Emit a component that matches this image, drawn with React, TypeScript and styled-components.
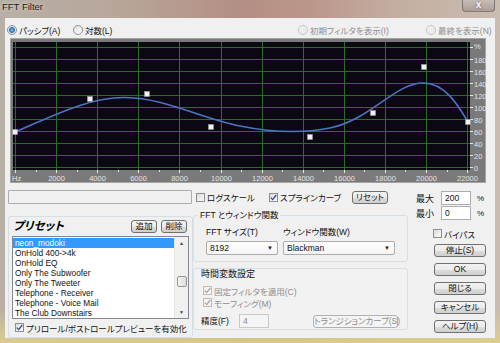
import React from 'react';
import styled, { createGlobalStyle } from 'styled-components';

const GlobalStyle = createGlobalStyle`
  html, body { margin: 0; padding: 0; }
  body {
    width: 500px;
    height: 343px;
    overflow: hidden;
    font-family: "Liberation Sans", "Noto Sans CJK JP", sans-serif;
    font-size: 8.5px;
    font-feature-settings: "palt";
    color: #111;
  }
`;

const Window = styled.div`
  width: 500px;
  height: 343px;
  box-sizing: border-box;
  display: flex;
  flex-direction: column;
  padding: 0 5px 5px 5px;
  background:
    linear-gradient(180deg, rgba(0, 0, 0, 0) 90%, rgba(222, 208, 140, 0.9) 100%),
    linear-gradient(90deg, #b7b0a6 0%, #b8a59a 25%, #b38e84 48%, #bb978b 62%, #c4aea3 80%, #c9bcb1 100%);
`;

const TitleBar = styled.div`
  height: 18px;
  display: flex;
  justify-content: space-between;
  align-items: flex-start;
  margin-left: -3px;
`;

const Title = styled.span`
  font-size: 9.5px;
  line-height: 14px;
  color: #1b1b1b;
  text-shadow: 0 0 4px rgba(255, 255, 255, 0.8);
`;

const CloseButton = styled.div`
  width: 33px;
  height: 12px;
  box-sizing: border-box;
  border: 1px solid rgba(90, 80, 80, 0.6);
  border-top: none;
  border-radius: 0 0 4px 4px;
  background: linear-gradient(180deg, rgba(200, 190, 186, 0.7), rgba(160, 145, 140, 0.7));
  color: #fff;
  font-weight: bold;
  font-size: 10px;
  line-height: 9px;
  text-align: center;
  text-shadow: 0 0 2px #444;
`;

const Client = styled.div`
  flex: 1;
  background: #f0f0f0;
  display: flex;
  flex-direction: column;
  min-height: 0;
`;

const RadioRow = styled.div`
  height: 14px;
  margin-top: 5px;
  padding-left: 2px;
  display: flex;
  align-items: center;
`;

const RadioGroup = styled.div`
  display: flex;
  align-items: center;
  margin-left: auto;
`;

const RadioItem = styled.label<{ $w: number; $disabled?: boolean }>`
  width: ${p => p.$w}px;
  display: inline-flex;
  align-items: center;
  gap: 2px;
  white-space: nowrap;
  color: ${p => (p.$disabled ? '#8d8d8d' : '#111')};
`;

const RadioDot = styled.span<{ $on?: boolean; $disabled?: boolean }>`
  width: 10px;
  height: 10px;
  box-sizing: border-box;
  border-radius: 50%;
  border: 1px solid ${p => (p.$disabled ? '#c4c4c4' : '#8e8f8f')};
  background: ${p =>
    p.$on
      ? 'radial-gradient(circle, #8ac4f0 0, #2a6db6 2.5px, #dfe8f2 3.3px, #eef2f6 100%)'
      : p.$disabled
      ? 'linear-gradient(135deg, #f4f4f4, #e6e6e6)'
      : 'linear-gradient(135deg, #e6e6e6, #fbfbfb)'};
`;

const Chart = styled.svg`
  display: block;
  margin: 1px 0 0 5px;
  width: 476px;
  height: 145px;
  font-family: "Liberation Sans", sans-serif;
`;

const Lower = styled.div`
  margin-top: 7px;
  padding-left: 3px;
  display: grid;
  grid-template-columns: 185px 221px 77px;
  align-items: start;
`;

const Column = styled.div`
  display: flex;
  flex-direction: column;
`;

const TextField = styled.div`
  width: 184px;
  height: 14px;
  box-sizing: border-box;
  border: 1px solid #abadb3;
  border-radius: 1px;
  background: #f0f0f0;
`;

const PresetGroup = styled.div`
  margin-top: 12px;
  height: 122px;
  box-sizing: border-box;
  border: 1px solid #d5dfe5;
  border-radius: 3px;
  padding: 3px 5px 0 4px;
  display: flex;
  flex-direction: column;
`;

const PresetHeader = styled.div`
  height: 13px;
  display: flex;
  align-items: center;
  gap: 4px;
`;

const PresetTitle = styled.span`
  flex: 1;
  font-size: 11.5px;
  font-weight: bold;
  font-style: italic;
  color: #000;
  line-height: 13px;
`;

const Button = styled.div<{ $w?: number; $disabled?: boolean }>`
  width: ${p => (p.$w ? `${p.$w}px` : 'auto')};
  height: 13px;
  box-sizing: border-box;
  border: 1px solid ${p => (p.$disabled ? '#adb2b5' : '#707070')};
  border-radius: 3px;
  background: ${p =>
    p.$disabled
      ? '#f4f4f4'
      : 'linear-gradient(180deg, #f2f2f2 0%, #ebebeb 50%, #dddddd 51%, #cfcfcf 100%)'};
  color: ${p => (p.$disabled ? '#8d8d8d' : '#111')};
  font-size: 8.5px;
  line-height: 11px;
  text-align: center;
  white-space: nowrap;
`;

const ListBox = styled.div`
  margin: 3px 0 0 -1px;
  width: 177px;
  height: 83px;
  box-sizing: border-box;
  border: 1px solid #828790;
  background: #fff;
  display: flex;
`;

const ListItems = styled.div`
  flex: 1;
  padding-top: 1px;
  overflow: hidden;
`;

const ListItem = styled.div<{ $selected?: boolean }>`
  height: 10px;
  line-height: 10px;
  padding-left: 2px;
  font-size: 8.3px;
  white-space: nowrap;
  background: ${p => (p.$selected ? '#3399ff' : 'transparent')};
  color: ${p => (p.$selected ? '#fff' : '#111')};
`;

const ScrollBar = styled.div`
  width: 13px;
  background: #f0f0f0;
  border-left: 1px solid #e6e6e6;
  display: flex;
  flex-direction: column;
  align-items: center;
`;

const ScrollArrow = styled.div<{ $bottom?: boolean }>`
  height: 12px;
  margin-top: ${p => (p.$bottom ? 'auto' : '0')};
  font-size: 5px;
  line-height: 12px;
  color: #444;
`;

const ScrollThumb = styled.div`
  margin-top: 27px;
  width: 10px;
  height: 11px;
  box-sizing: border-box;
  border: 1px solid #979797;
  border-radius: 2px;
  background: linear-gradient(90deg, #f3f3f3, #dcdcdc);
`;

const CheckItem = styled.label<{ $w?: number; $disabled?: boolean }>`
  width: ${p => (p.$w ? `${p.$w}px` : 'auto')};
  height: 11px;
  display: inline-flex;
  align-items: center;
  gap: 2px;
  white-space: nowrap;
  color: ${p => (p.$disabled ? '#8d8d8d' : '#111')};
`;

const CheckBox = styled.span<{ $disabled?: boolean }>`
  width: 9px;
  height: 9px;
  flex: none;
  box-sizing: border-box;
  border: 1px solid ${p => (p.$disabled ? '#bcbcbc' : '#8f8f8f')};
  background: ${p =>
    p.$disabled ? '#f4f4f4' : 'linear-gradient(135deg, #dcdcdc, #fbfbfb)'};
  display: flex;
  align-items: center;
  justify-content: center;
`;

const PreviewRow = styled.div`
  margin-top: 3px;
  padding-left: 2px;
`;

const OptionRow = styled.div`
  height: 14px;
  padding-left: 3px;
  display: flex;
  align-items: center;
`;

const FieldSet = styled.fieldset`
  margin: 6px 0 0 0;
  width: 215px;
  box-sizing: border-box;
  padding: 6px 0 6px 12px;
  border: 1px solid #d5dfe5;
  border-radius: 3px;
  min-width: 0;
  display: flex;
`;

const Legend = styled.legend`
  padding: 0 2px;
  margin-left: -8px;
  line-height: 11px;
`;

const FieldCol = styled.div<{ $w: number }>`
  width: ${p => p.$w}px;
  display: flex;
  flex-direction: column;
  gap: 3px;
`;

const FieldLabel = styled.span<{ $w?: number }>`
  width: ${p => (p.$w ? `${p.$w}px` : 'auto')};
  line-height: 11px;
  white-space: nowrap;
`;

const Combo = styled.div<{ $w: number }>`
  width: ${p => p.$w}px;
  height: 14px;
  box-sizing: border-box;
  border: 1px solid #acacac;
  border-radius: 2px;
  background: linear-gradient(180deg, #ffffff, #f4f4f4);
  display: flex;
  align-items: center;
  justify-content: space-between;
  padding: 0 4px 0 3px;
  font-size: 8.5px;
`;

const ComboArrow = styled.span`
  font-size: 6px;
  color: #222;
`;

const TimePanel = styled.div`
  margin-top: 6px;
  width: 215px;
  box-sizing: border-box;
  border: 1px solid #d5dfe5;
  border-radius: 3px;
  background: #f2f2f2;
  padding: 0 0 1px 7px;
  display: flex;
  flex-direction: column;
`;

const PanelTitle = styled.span`
  line-height: 11px;
  font-size: 9px;
`;

const PanelCheck = styled.div<{ $top: number }>`
  margin-top: ${p => p.$top}px;
  padding-left: 2px;
`;

const PrecisionRow = styled.div`
  margin-top: 6px;
  height: 14px;
  display: flex;
  align-items: center;
`;

const TransitionButton = styled(Button)`
  margin-left: 44px;
`;

const Input = styled.div<{ $w: number; $disabled?: boolean }>`
  width: ${p => p.$w}px;
  height: 14px;
  box-sizing: border-box;
  border: 1px solid ${p => (p.$disabled ? '#c9c9c9' : '#abadb3')};
  background: ${p => (p.$disabled ? '#f4f4f4' : '#fff')};
  color: ${p => (p.$disabled ? '#8d8d8d' : '#111')};
  padding-left: 3px;
  font-size: 8.5px;
  line-height: 12px;
`;

const ValueRow = styled.div<{ $top: number }>`
  margin-top: ${p => p.$top}px;
  height: 14px;
  padding-left: 2px;
  display: flex;
  align-items: center;
`;

const ValueLabel = styled.span`
  width: 25px;
  font-size: 9px;
`;

const Unit = styled.span`
  margin-left: 6px;
  font-size: 8px;
`;

const BypassRow = styled.div`
  margin-top: 8px;
  padding-left: 19px;
`;

const ButtonStack = styled.div`
  margin-top: 4px;
  padding-left: 20px;
  display: flex;
  flex-direction: column;
  gap: 6px;
`;

const Check = ({ disabled }: { disabled?: boolean }) => (
  <svg width="7" height="7" viewBox="0 0 7 7">
    <path
      d="M0.8 3.6 L2.7 5.6 L6.3 1"
      fill="none"
      stroke={disabled ? '#a6a6a6' : '#2c4f9e'}
      strokeWidth="1.3"
    />
  </svg>
);

const CheckField = ({
  label,
  checked,
  disabled,
  w,
}: {
  label: string;
  checked?: boolean;
  disabled?: boolean;
  w?: number;
}) => (
  <CheckItem $w={w} $disabled={disabled}>
    <CheckBox $disabled={disabled}>{checked && <Check disabled={disabled} />}</CheckBox>
    {label}
  </CheckItem>
);

const presets = [
  'neon_modoki',
  'OnHold 400->4k',
  'OnHold EQ',
  'Only The Subwoofer',
  'Only The Tweeter',
  'Telephone - Receiver',
  'Telephone - Voice Mail',
  'The Club Downstairs',
];

// crisp 1px lines: snap to pixel centres
const gridX = Array.from({ length: 12 }, (_, i) => Math.round(15 + i * 41.1) + 0.5);
const gridY = Array.from({ length: 11 }, (_, j) => 47 + j * 12 + 0.5);
const minorX = Array.from({ length: 23 }, (_, i) => Math.round(15 + i * 20.55) + 0.5);
const points: [number, number][] = [
  [15, 132],
  [90, 99],
  [147, 94],
  [211, 127],
  [310, 137],
  [373, 113],
  [424, 67],
  [468, 122],
];

const FilterChart = () => (
  <Chart viewBox="0 0 476 145">
    <g transform="translate(-10,-38)">
      <rect x="10.5" y="38.5" width="475" height="144" fill="#7a7a7a" stroke="#a4a4a4" />
      <rect x="13" y="42" width="457" height="128" fill="#0b0814" />
      {gridX.map(x => (
        <line key={`v${x}`} x1={x} y1="42" x2={x} y2="170" stroke="#2a6e2a" strokeWidth="1" />
      ))}
      {gridY.map(y => (
        <line key={`h${y}`} x1="13" y1={y} x2="470" y2={y} stroke="#2a6e2a" strokeWidth="1" />
      ))}
      {minorX.map((x, i) => (
        <line key={`t${i}`} x1={x} y1="170" x2={x} y2={i % 2 ? 172 : 173} stroke="#e6e6e6" />
      ))}
      {gridY.map(y => (
        <line key={`r${y}`} x1="470" y1={y} x2="473" y2={y} stroke="#e6e6e6" />
      ))}
      <text x="12" y="181" fontSize="7.5" fill="#e4e4e4">Hz</text>
      {gridX.slice(1).map((x, i) => (
        <text key={`l${i}`} x={x} y="181" fontSize="7.5" fill="#e4e4e4" textAnchor="middle">
          {(i + 1) * 2000}
        </text>
      ))}
      <text x="474" y="49" fontSize="7.5" fill="#e4e4e4">%</text>
      {gridY.slice(1).map((y, j) => (
        <text key={`p${j}`} x="474" y={y + 3} fontSize="7.5" fill="#e4e4e4">
          {180 - j * 20}
        </text>
      ))}
      <path
        d="M15,132 C55,115 90,97 125,97.5 C165,98 200,118 240,126 C270,132 300,134 330,128 C370,120 395,83 423,83 C445,83 458,105 468,122"
        fill="none"
        stroke="#4b74c6"
        strokeWidth="1.6"
      />
      {points.map(([x, y]) => (
        <rect
          key={`pt${x}`}
          x={x - 2.5}
          y={y - 2.5}
          width="5"
          height="5"
          fill="#f0f0f0"
          stroke="#9a9a9a"
          strokeWidth="0.6"
        />
      ))}
    </g>
  </Chart>
);

export default function App() {
  return (
    <>
      <GlobalStyle />
      <Window>
        <TitleBar>
          <Title>FFT Filter</Title>
          <CloseButton>x</CloseButton>
        </TitleBar>
        <Client>
          <RadioRow>
            <RadioItem $w={66}>
              <RadioDot $on />
              パッシブ(A)
            </RadioItem>
            <RadioItem $w={80}>
              <RadioDot />
              対数(L)
            </RadioItem>
            <RadioGroup>
              <RadioItem $w={128} $disabled>
                <RadioDot $disabled />
                初期フィルタを表示(I)
              </RadioItem>
              <RadioItem $w={69} $disabled>
                <RadioDot $disabled />
                最終を表示(N)
              </RadioItem>
            </RadioGroup>
          </RadioRow>

          <FilterChart />

          <Lower>
            <Column>
              <TextField />
              <PresetGroup>
                <PresetHeader>
                  <PresetTitle>プリセット</PresetTitle>
                  <Button $w={26}>追加</Button>
                  <Button $w={26}>削除</Button>
                </PresetHeader>
                <ListBox>
                  <ListItems>
                    {presets.map((p, i) => (
                      <ListItem key={p} $selected={i === 0}>
                        {p}
                      </ListItem>
                    ))}
                  </ListItems>
                  <ScrollBar>
                    <ScrollArrow>▲</ScrollArrow>
                    <ScrollThumb />
                    <ScrollArrow $bottom>▼</ScrollArrow>
                  </ScrollBar>
                </ListBox>
                <PreviewRow>
                  <CheckField label="プリロール/ポストロールプレビューを有効化" checked />
                </PreviewRow>
              </PresetGroup>
            </Column>

            <Column>
              <OptionRow>
                <CheckField label="ログスケール" w={73} />
                <CheckField label="スプラインカーブ" checked w={83} />
                <Button $w={36}>リセット</Button>
              </OptionRow>
              <FieldSet>
                <Legend>FFT とウィンドウ関数</Legend>
                <FieldCol $w={77}>
                  <FieldLabel>FFT サイズ(T)</FieldLabel>
                  <Combo $w={72}>
                    8192
                    <ComboArrow>▼</ComboArrow>
                  </Combo>
                </FieldCol>
                <FieldCol $w={112}>
                  <FieldLabel>ウィンドウ関数(W)</FieldLabel>
                  <Combo $w={112}>
                    Blackman
                    <ComboArrow>▼</ComboArrow>
                  </Combo>
                </FieldCol>
              </FieldSet>
              <TimePanel>
                <PanelTitle>時間変数設定</PanelTitle>
                <PanelCheck $top={5}>
                  <CheckField label="固定フィルタを適用(C)" checked disabled />
                </PanelCheck>
                <PanelCheck $top={1}>
                  <CheckField label="モーフィング(M)" checked disabled />
                </PanelCheck>
                <PrecisionRow>
                  <FieldLabel $w={38}>精度(F)</FieldLabel>
                  <Input $w={30} $disabled>4</Input>
                  <TransitionButton $w={85} $disabled>
                    トランジションカーブ(S)
                  </TransitionButton>
                </PrecisionRow>
              </TimePanel>
            </Column>

            <Column>
              <ValueRow $top={1}>
                <ValueLabel>最大</ValueLabel>
                <Input $w={30}>200</Input>
                <Unit>%</Unit>
              </ValueRow>
              <ValueRow $top={1}>
                <ValueLabel>最小</ValueLabel>
                <Input $w={30}>0</Input>
                <Unit>%</Unit>
              </ValueRow>
              <BypassRow>
                <CheckField label="バイパス" />
              </BypassRow>
              <ButtonStack>
                <Button $w={52}>停止(S)</Button>
                <Button $w={52}>OK</Button>
                <Button $w={52}>閉じる</Button>
                <Button $w={52}>キャンセル</Button>
                <Button $w={52}>ヘルプ(H)</Button>
              </ButtonStack>
            </Column>
          </Lower>
        </Client>
      </Window>
    </>
  );
}
